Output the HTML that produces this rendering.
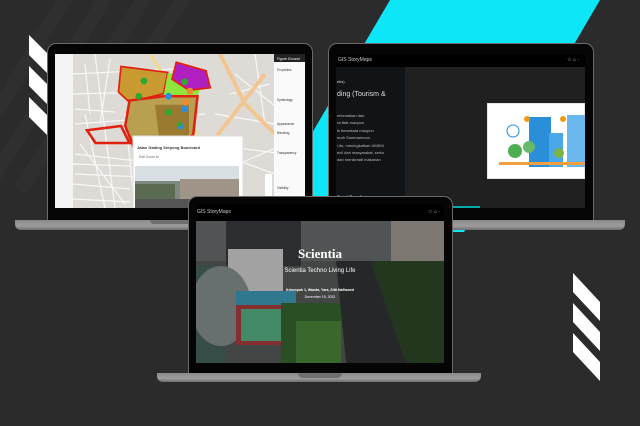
<!DOCTYPE html>
<html><head><meta charset="utf-8"><style>
*{margin:0;padding:0;box-sizing:border-box}
body{width:640px;height:426px;background:#2b2b2c;position:relative;overflow:hidden;font-family:"Liberation Sans",sans-serif}
.abs{position:absolute}
.bezel{background:#050505;border:1px solid #6a6a6a;border-radius:9px 9px 0 0}
.base{background:linear-gradient(#8a8a8a,#9d9d9d 60%,#6e6e6e);border-radius:0 0 6px 6px}
.notch{background:#6f6f6f;border-radius:0 0 5px 5px}
</style></head><body>
<svg class="abs" style="left:0;top:0" width="640" height="426">
<g stroke="#2f2f30" stroke-width="14">
<line x1="-20" y1="140" x2="70" y2="-10"/><line x1="-20" y1="200" x2="110" y2="-10"/><line x1="20" y1="190" x2="150" y2="-10"/><line x1="60" y1="180" x2="190" y2="-10"/>
</g>
<polygon points="390,0 600,0 464,232 254,232" fill="#0ce6f6"/>
<g fill="#fff">
<polygon points="29,35 60,66 60,86 29,55"/><polygon points="29,66 60,97 60,117 29,86"/><polygon points="29,97 60,128 60,148 29,117"/>
<polygon points="573,273 600,302 600,321 573,292"/><polygon points="573,303 600,332 600,351 573,322"/><polygon points="573,333 600,362 600,381 573,352"/>
</g>
</svg>

<!-- left laptop -->
<div class="abs bezel" style="left:47px;top:43px;width:266px;height:178px"></div>
<div class="abs base" style="left:15px;top:220px;width:318px;height:10px"></div>
<div class="abs notch" style="left:150px;top:220px;width:60px;height:4px"></div>
<svg class="abs" style="left:55px;top:54px" width="250" height="154">
<rect width="250" height="154" fill="#dedbd6"/>
<rect width="18" height="154" fill="#f3f3f3"/>
<g stroke="#f8f8f8" stroke-width="1.2" fill="none">
<path d="M18 20 L120 15 M18 40 L90 38 M20 70 L150 60 M20 100 L110 110 M20 120 L130 125 M40 0 L60 154 M70 60 L80 154 M95 80 L100 154 M25 90 L70 150 M30 60 L50 154 M160 120 L230 90 M180 20 L230 60 M150 90 L230 100 M200 0 L210 70 M18 110 L75 112 M18 130 L75 135 M18 145 L75 148 M30 10 L35 60 M55 5 L45 70 M20 55 L60 58 M160 60 L220 70 M165 100 L220 120 M175 40 L215 30"/>
</g>
<path d="M95 0 C120 40 140 60 150 110" stroke="#f0dc80" stroke-width="2.5" fill="none"/>
<path d="M165 0 L190 50 L230 90" stroke="#f2c690" stroke-width="4" fill="none"/>
<path d="M210 20 L140 110" stroke="#f2c690" stroke-width="4" fill="none"/>
<g transform="translate(15,4) scale(0.85)">
<polygon points="60,10 115,17 110,42 70,52 57,40" fill="#c89a30" stroke="#e02010" stroke-width="2"/>
<polygon points="115,18 160,18 150,45 110,45" fill="#8ee63c"/>
<polygon points="125,5 160,15 165,35 140,38 120,25" fill="#b020c0" stroke="#e02010" stroke-width="2"/>
<polygon points="70,50 110,45 150,45 145,90 120,110 75,105 65,80" fill="#b8a050" stroke="#e02010" stroke-width="3"/>
<polygon points="100,55 140,55 140,95 105,95" fill="#9a7a30"/>
<polygon points="20,85 60,80 70,100 30,100" fill="none" stroke="#e02010" stroke-width="3"/>
<g fill="#2d8ee0"><circle cx="116" cy="45" r="4"/><circle cx="101" cy="95" r="4"/><circle cx="135" cy="60" r="4"/><circle cx="130" cy="80" r="4"/><circle cx="80" cy="115" r="4"/></g>
<g fill="#2ea82e"><circle cx="87" cy="27" r="4"/><circle cx="135" cy="28" r="4"/><circle cx="81" cy="45" r="4"/><circle cx="116" cy="64" r="4"/><circle cx="129" cy="78" r="3"/></g>
<g fill="#f08a30"><circle cx="141" cy="39" r="4"/><circle cx="136" cy="52" r="4"/></g>
</g>
<rect x="219" y="0" width="31" height="154" fill="#fafafa"/>
<rect x="219" y="0" width="31" height="8" fill="#222"/>
<text x="222" y="6" font-size="3.5" fill="#fff">Figure Ground</text>
<g font-size="3.2" fill="#333"><text x="222" y="17">Properties</text><text x="222" y="47">Symbology</text><text x="222" y="71">Appearance</text><text x="222" y="80">Blending</text><text x="222" y="100">Transparency</text><text x="222" y="135">Visibility</text></g>
<rect x="78" y="82" width="110" height="72" fill="#fff" stroke="#ddd"/>
<text x="82" y="95" font-size="4" font-weight="bold" fill="#333">Jalan Gading Serpong Boulevard</text>
<text x="84" y="104" font-size="3.5" fill="#666">Edit    Zoom to</text>
<rect x="80" y="112" width="104" height="42" fill="#7c8a80"/>
<rect x="80" y="112" width="104" height="15" fill="#d8e0e4"/>
<rect x="80" y="130" width="40" height="24" fill="#5b6a52"/>
<rect x="125" y="125" width="59" height="29" fill="#a09488"/>
<rect x="80" y="145" width="104" height="9" fill="#555"/>
<rect x="210" y="120" width="7" height="30" fill="#fff"/>
</svg>

<!-- right laptop -->
<div class="abs bezel" style="left:328px;top:43px;width:266px;height:178px"></div>
<div class="abs base" style="left:320px;top:220px;width:305px;height:10px"></div>
<div class="abs" style="left:336px;top:54px;width:249px;height:154px;background:#202020">
<div class="abs" style="left:0;top:0;width:249px;height:13px;background:#000;color:#ccc;font-size:5px;line-height:13px;padding-left:2px">GIS StoryMaps<span style="float:right;padding-right:6px">☆ ⌂ ·</span></div>
<div class="abs" style="left:0;top:13px;width:69px;height:141px;background:#111417;color:#ddd;font-size:4px;line-height:7.4px">
<div style="position:absolute;top:11px;left:1px">eks)</div>
<div style="position:absolute;top:24px;left:1px;font-size:7px">ding (Tourism &amp;</div>
<div style="position:absolute;top:45px;left:1px;color:#bbb">erkenalkan dan<br>ra fisik maupun<br>ik berwisata maupun<br>erah Summarecon<br>i itu, meningkatkan UMKM<br>ecil dari masyarakat, serta<br>dan menikmati makanan</div>
<div style="position:absolute;top:126px;left:1px;font-weight:bold">Smart Branding</div>
</div>
<svg class="abs" style="left:151px;top:49px" width="98" height="76"><rect width="98" height="76" fill="#fff" stroke="#ccc"/>
<rect x="42" y="14" width="22" height="50" fill="#2a8ed8"/><rect x="62" y="30" width="14" height="34" fill="#4aa8e8"/><rect x="80" y="12" width="18" height="52" fill="#6ab8ee"/>
<circle cx="28" cy="48" r="7" fill="#4caf50"/><circle cx="42" cy="44" r="6" fill="#66bb6a"/><circle cx="72" cy="50" r="5" fill="#7cb342"/>
<circle cx="26" cy="28" r="6" fill="none" stroke="#2a8ed8"/><circle cx="40" cy="16" r="3" fill="#f39c12"/><circle cx="76" cy="16" r="3" fill="#f39c12"/>
<rect x="12" y="59" width="86" height="3" fill="#f0a040"/></svg>
<div class="abs" style="left:69px;top:152px;width:75px;height:2px;background:#0aa"></div>
</div>

<!-- center laptop -->
<div class="abs bezel" style="left:188px;top:196px;width:265px;height:178px"></div>
<div class="abs base" style="left:157px;top:373px;width:324px;height:9px"></div>
<div class="abs notch" style="left:298px;top:373px;width:44px;height:5px"></div>
<div class="abs" style="left:196px;top:204px;width:248px;height:159px;background:#000;overflow:hidden">
<div style="height:17px;color:#ccc;font-size:5px;line-height:17px;padding-left:1px">GIS StoryMaps<span style="float:right;padding-right:4px">☆ ⌂ ·</span></div>
<svg width="248" height="142" style="display:block">
<rect width="248" height="142" fill="#5a5e5c"/>
<rect x="0" y="0" width="248" height="40" fill="#6c7070"/>
<rect x="30" y="0" width="75" height="45" fill="#3a3d40"/>
<rect x="195" y="0" width="53" height="45" fill="#a8a09a"/>
<rect x="32" y="28" width="55" height="45" fill="#d8d8d8"/>
<rect x="0" y="45" width="30" height="97" fill="#4a6860"/>
<ellipse cx="25" cy="85" rx="30" ry="40" fill="#8a9494"/>
<rect x="40" y="70" width="60" height="14" fill="#40a0c0"/>
<rect x="40" y="84" width="58" height="40" fill="#b04040"/>
<rect x="45" y="88" width="48" height="32" fill="#5cb888"/>
<rect x="85" y="82" width="60" height="60" fill="#3a6a30"/>
<rect x="100" y="100" width="45" height="42" fill="#4e8a3a"/>
<polygon points="140,40 175,40 210,142 150,142" fill="#333537"/>
<polygon points="175,40 248,40 248,142 210,142" fill="#2f4a2a"/>
<rect x="0" y="0" width="248" height="142" fill="#000" opacity="0.25"/>
</svg>
<div class="abs" style="left:0;top:42px;width:248px;text-align:center;color:#fff;font-family:'Liberation Serif',serif;font-weight:bold;font-size:13px">Scientia</div>
<div class="abs" style="left:0;top:64px;width:248px;text-align:center;color:#fff;font-size:6px">Scientia Techno Living Life</div>
<div class="abs" style="left:0;top:84px;width:248px;text-align:center;color:#fff;font-size:3.5px;font-weight:bold">Kelompok 1, Wanda, Yara, Sitti Nafhaned</div>
<div class="abs" style="left:0;top:91px;width:248px;text-align:center;color:#fff;font-size:3.5px">December 15, 2022</div>
</div>
</body></html>
